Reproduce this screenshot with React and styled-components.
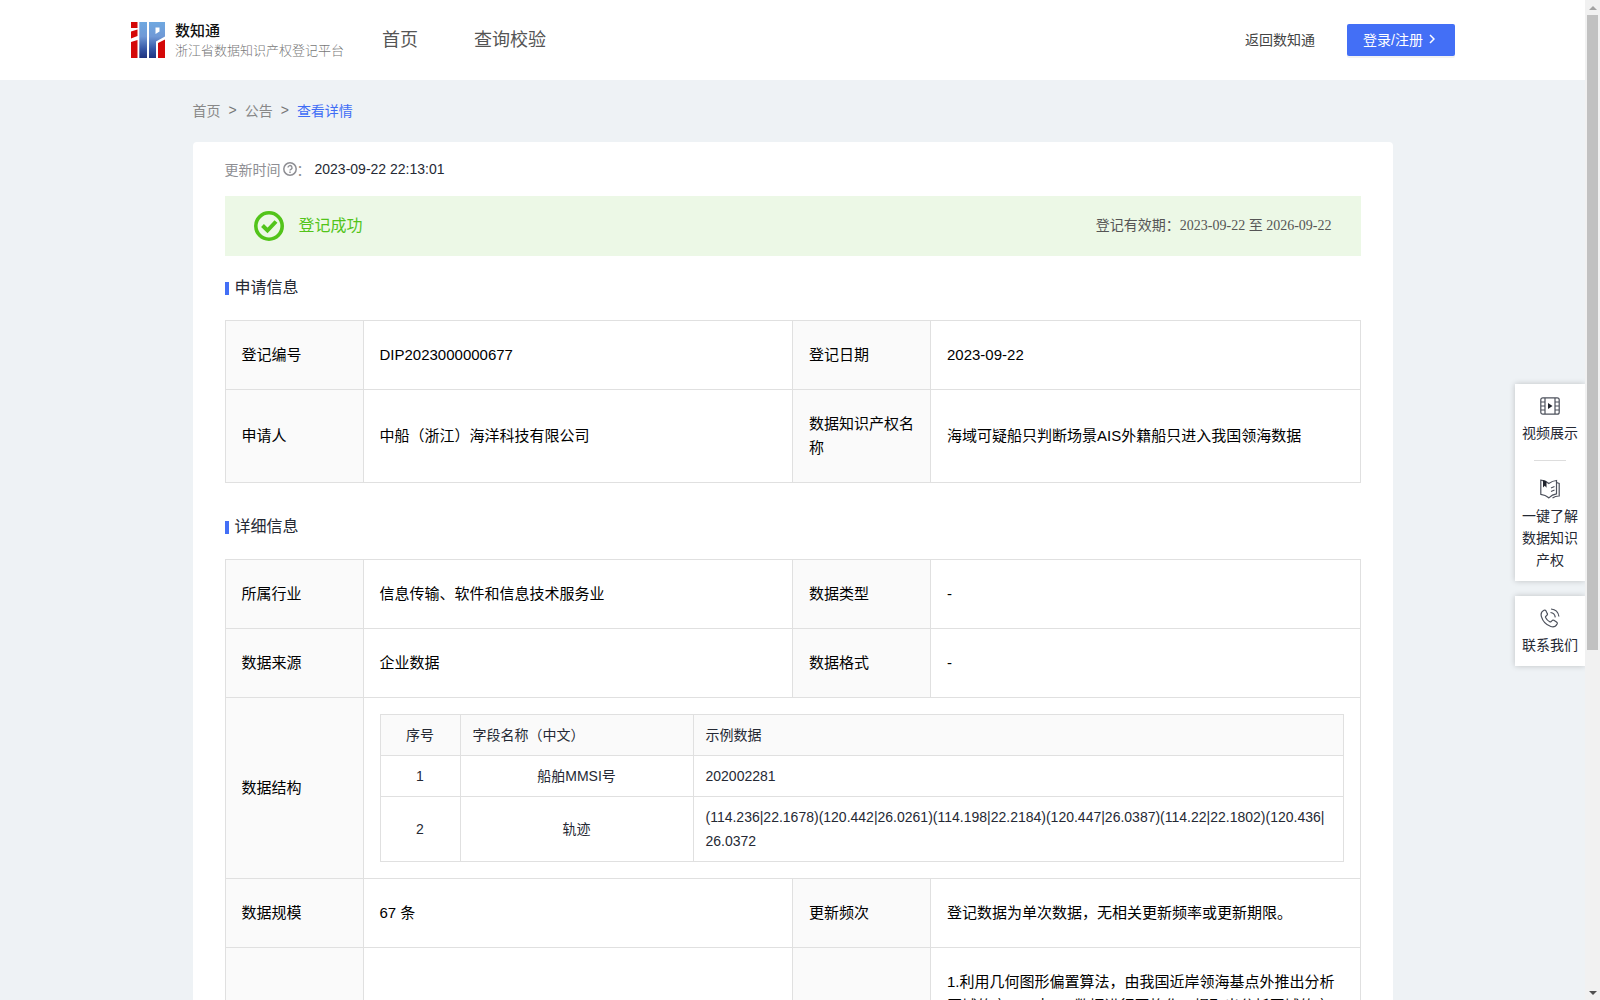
import React from "react";
import styled, { createGlobalStyle, css } from "styled-components";

const applyRows = [
	["登记编号", "DIP2023000000677", "登记日期", "2023-09-22"],
	[
		"申请人",
		"中船（浙江）海洋科技有限公司",
		"数据知识产权名称",
		"海域可疑船只判断场景AIS外籍船只进入我国领海数据",
	],
];

const detailRows = [
	["所属行业", "信息传输、软件和信息技术服务业", "数据类型", "-"],
	["数据来源", "企业数据", "数据格式", "-"],
];

const fields = [
	{ id: 1, name: "船舶MMSI号", sample: "202002281" },
	{
		id: 2,
		name: "轨迹",
		sample: "(114.236|22.1678)(120.442|26.0261)(114.198|22.2184)(120.447|26.0387)(114.22|22.1802)(120.436|26.0372",
	},
];

const Logo = () => (
	<LogoSvg viewBox="0 0 34 36" aria-hidden="true">
		<defs>
			<linearGradient id="logoBlue" x1="0" y1="0" x2="0" y2="36" gradientUnits="userSpaceOnUse">
				<stop offset="0" stopColor="#6fa8e0" />
				<stop offset="0.4" stopColor="#7099d6" />
				<stop offset="0.75" stopColor="#3657a6" />
				<stop offset="1" stopColor="#20347f" />
			</linearGradient>
		</defs>
		<path fill="#d40808" d="M0 0h6.500v6H0zM0 9.500l6.500-2v6.500l-6.500 2.500zM0 20l6.500-2v18H0zM27 21l7-3.500V36h-7z" />
		<path
			fill="url(#logoBlue)"
			fillRule="evenodd"
			d="M8.300 0h7.700v36H8.300zM18 0h16v14.500l-9 5V36h-7zM24.500 5.500v6.500l4-2.500v-4z"
		/>
	</LogoSvg>
);

const HelpIcon = () => (
	<svg width="14" height="14" viewBox="0 0 14 14" fill="none" stroke="currentColor" aria-hidden="true">
		<circle cx="7" cy="7" r="6.2" strokeWidth="1.5" />
		<path d="M5 5.6a2 2 0 1 1 3 1.7c-.7.4-1 .7-1 1.3" strokeWidth="1.4" />
		<path d="M7 9.6v1.3" strokeWidth="1.4" />
	</svg>
);

const SuccessIcon = () => (
	<svg width="30" height="30" viewBox="0 0 30 30" fill="none" stroke="#52c41a" aria-hidden="true">
		<circle cx="15" cy="15" r="13.2" strokeWidth="3.6" />
		<path d="M8.5 14.5l5 5 8.500-9" strokeWidth="4" />
	</svg>
);

const ArrowIcon = () => (
	<svg width="6" height="10" viewBox="0 0 6 10" fill="none" stroke="#fff" strokeWidth="1.5" aria-hidden="true">
		<path d="M1 1l4 4-4 4" />
	</svg>
);

const VideoIcon = () => (
	<svg width="20" height="20" viewBox="0 0 20 20" fill="none" stroke="#4d515c" strokeWidth="1.2" aria-hidden="true">
		<rect x="0.8" y="1.8" width="18.4" height="16.4" rx="2" />
		<path d="M5 2v16M15 2v16M1 6h4M1 10h4M1 14h4M15 6h4M15 10h4M15 14h4" />
		<path d="M8 7v6l4.5-3z" fill="#20232c" stroke="none" />
	</svg>
);

const BookIcon = () => (
	<svg width="20" height="20" viewBox="0 0 20 20" fill="none" stroke="#4d515c" strokeWidth="1.2" aria-hidden="true">
		<path d="M.8 1.200c3.200.2 5.700 1.200 8 3.300 2.300-1.700 4.800-2.800 7.700-3v13.300c-3 .4-5.400 1.700-7.700 4C6.500 16.700 4 15.600.8 15.300z" />
		<path d="M16.500 3.500l2.700 1v12.500c-2.700-.1-4.700.6-6.700 2" />
		<path d="M11 9l3.500-1.500M11 12.500l3.500-1.500" />
		<path d="M3 1v7.500l1.800-1.700 1.700 2V2.500z" fill="#20232c" stroke="none" />
	</svg>
);

const PhoneIcon = () => (
	<svg width="20" height="20" viewBox="0 0 20 20" fill="none" stroke="#4d515c" strokeWidth="1.2" aria-hidden="true">
		<path d="M4 2.300C1.500 3.500.6 5.800 1.400 8.600c1.400 4.800 4.600 8.200 9.400 9.900 2.700.9 5-.1 6.300-2.500.4-.8.1-1.500-.6-2l-2.600-1.700c-.7-.4-1.400-.3-1.900.3l-.9 1c-.4.4-.9.5-1.400.2-1.900-1-3.200-2.400-4.100-4.300-.2-.5-.1-1 .3-1.300l1-.9c.6-.5.7-1.200.3-1.900L5.900 2.800c-.4-.7-1.100-.9-1.900-.5z" />
		<path d="M10.500 4.500c2.700.3 4.400 2 4.800 4.800M11 1c4.500.4 7.300 3 7.900 7.500" />
	</svg>
);

const InfoRow = ({ cells }) => (
	<tr>
		<Label scope="row">{cells[0]}</Label>
		<Value>{cells[1]}</Value>
		<Label scope="row">{cells[2]}</Label>
		<Value>{cells[3]}</Value>
	</tr>
);

const Columns = () => (
	<colgroup>
		<LabelCol />
		<col />
		<LabelCol />
		<col />
	</colgroup>
);

const App = () => {
	return (
		<Shell>
			<GlobalStyle />
			<Page>
				<Header>
					<Brand href="#">
						<Logo />
						<BrandText>
							<BrandName>数知通</BrandName>
							<BrandSub>浙江省数据知识产权登记平台</BrandSub>
						</BrandText>
					</Brand>
					<Nav>
						<NavLink href="#">首页</NavLink>
						<NavLink href="#">查询校验</NavLink>
					</Nav>
					<BackLink href="#">返回数知通</BackLink>
					<LoginButton type="button">
						登录/注册
						<ArrowIcon />
					</LoginButton>
				</Header>

				<Content>
					<Breadcrumb>
						<Crumb href="#">首页</Crumb>
						<Sep>&gt;</Sep>
						<Crumb href="#">公告</Crumb>
						<Sep>&gt;</Sep>
						<Crumb href="#" $active>
							查看详情
						</Crumb>
					</Breadcrumb>

					<Card>
						<UpdateRow>
							更新时间
							<HelpIcon />：<UpdateTime>2023-09-22 22:13:01</UpdateTime>
						</UpdateRow>
						<Banner>
							<SuccessIcon />
							<BannerTitle>登记成功</BannerTitle>
							<Validity>登记有效期：2023-09-22 至 2026-09-22</Validity>
						</Banner>

						<SectionTitle>申请信息</SectionTitle>
						<InfoTable>
							<Columns />
							<tbody>
								{applyRows.map((row) => (
									<InfoRow key={row[0]} cells={row} />
								))}
							</tbody>
						</InfoTable>

						<SectionTitle>详细信息</SectionTitle>
						<InfoTable>
							<Columns />
							<tbody>
								{detailRows.map((row) => (
									<InfoRow key={row[0]} cells={row} />
								))}
								<tr>
									<Label scope="row">数据结构</Label>
									<NestedCell colSpan={3}>
										<FieldTable>
											<thead>
												<tr>
													<FieldHead $width="80px" $center>
														序号
													</FieldHead>
													<FieldHead $width="233px">字段名称（中文）</FieldHead>
													<FieldHead>示例数据</FieldHead>
												</tr>
											</thead>
											<tbody>
												{fields.map((field) => (
													<tr key={field.id}>
														<FieldCell $center>{field.id}</FieldCell>
														<FieldCell $center>{field.name}</FieldCell>
														<FieldCell>{field.sample}</FieldCell>
													</tr>
												))}
											</tbody>
										</FieldTable>
									</NestedCell>
								</tr>
								<InfoRow
									cells={[
										"数据规模",
										"67 条",
										"更新频次",
										"登记数据为单次数据，无相关更新频率或更新期限。",
									]}
								/>
								<RuleRow>
									<Label />
									<Value />
									<Label />
									<Value>
										1.利用几何图形偏置算法，由我国近岸领海基点外推出分析区域的交AIS,由AIS数据进行网格化，提取出分析区域的交
									</Value>
								</RuleRow>
							</tbody>
						</InfoTable>
					</Card>
				</Content>
			</Page>

			<SideTools>
				<ToolBox>
					<Tool href="#">
						<VideoIcon />
						视频展示
					</Tool>
					<Divider />
					<Tool href="#">
						<BookIcon />
						一键了解数据知识产权
					</Tool>
				</ToolBox>
				<ToolBox>
					<Tool href="#">
						<PhoneIcon />
						联系我们
					</Tool>
				</ToolBox>
			</SideTools>

			<ScrollBar>
				<ScrollArrow />
				<ScrollTrack>
					<ScrollThumb />
				</ScrollTrack>
				<ScrollArrow $down />
			</ScrollBar>
		</Shell>
	);
};

export default App;

const GlobalStyle = createGlobalStyle`
	* {
		box-sizing: border-box;
	}
	body {
		margin: 0;
		font-family: "Liberation Sans", "Noto Sans CJK SC", sans-serif;
		font-size: 14px;
		color: #252934;
		background: #eef2f5;
	}
	a {
		color: inherit;
		text-decoration: none;
	}
`;

const Shell = styled.div`
	position: relative;
	display: flex;
	height: 100vh;
	overflow: hidden;
`;

const Page = styled.div`
	flex: 1;
	min-width: 0;
	overflow: hidden;
`;

const Header = styled.header`
	display: flex;
	align-items: center;
	height: 80px;
	padding: 0 130px;
	background: #fff;
`;

const Brand = styled.a`
	display: flex;
	align-items: center;
	gap: 10px;
	padding-left: 1px;
`;

const LogoSvg = styled.svg`
	width: 34px;
	height: 36px;
`;

const BrandText = styled.div`
	display: flex;
	flex-direction: column;
	font-family: "Noto Sans CJK SC", sans-serif;
	line-height: 20px;
`;

const BrandName = styled.span`
	font-size: 15px;
	font-weight: 500;
	color: #111;
`;

const BrandSub = styled.span`
	font-size: 13px;
	font-weight: 300;
	color: #777;
`;

const Nav = styled.nav`
	display: flex;
	flex: 1;
	gap: 56px;
	margin-left: 38px;
`;

const NavLink = styled.a`
	font-size: 18px;
	line-height: 24px;
	color: #555;
`;

const BackLink = styled.a`
	padding-bottom: 2px;
	color: #444;
`;

const LoginButton = styled.button`
	display: flex;
	align-items: center;
	gap: 6px;
	width: 108px;
	height: 32px;
	margin-left: 32px;
	padding: 0 16px 2px;
	border: 0;
	border-radius: 2px;
	background: #436ff6;
	box-shadow: 0 2px 0 rgba(0, 0, 0, 0.05);
	color: #fff;
	font-family: inherit;
	font-size: 14px;
	cursor: pointer;
`;

const Content = styled.main`
	max-width: 1200px;
	margin: 0 auto;
`;

const Breadcrumb = styled.nav`
	display: flex;
	align-items: center;
	gap: 8px;
	height: 62px;
	padding-bottom: 2px;
`;

const Crumb = styled.a`
	color: ${(props) => (props.$active ? "#3f6df5" : "#888")};
`;

const Sep = styled.span`
	color: #777;
`;

const Card = styled.section`
	padding: 16px 32px;
	border-radius: 4px;
	background: #fff;
`;

const UpdateRow = styled.div`
	display: flex;
	align-items: center;
	height: 22px;
	margin-bottom: 16px;
	color: #8e8e93;

	svg {
		margin-left: 2px;
	}
`;

const UpdateTime = styled.span`
	margin-left: 4px;
	color: #252934;
`;

const Banner = styled.div`
	display: flex;
	align-items: center;
	height: 60px;
	padding: 0 29px;
	background: #ecf8e6;

	span {
		padding-bottom: 4px;
	}
`;

const BannerTitle = styled.span`
	flex: 1;
	margin-left: 15px;
	font-size: 16px;
	color: #52c41a;
`;

const Validity = styled.span`
	font-family: "Liberation Serif", "Noto Sans CJK SC", serif;
	color: #555;
`;

const SectionTitle = styled.h2`
	display: flex;
	align-items: center;
	gap: 6px;
	height: 24px;
	margin: 18px 0 22px;
	font-size: 16px;
	font-weight: 400;

	&::before {
		content: "";
		width: 4px;
		height: 13px;
		margin-top: 4px;
		background: #436ff6;
	}
`;

const InfoTable = styled.table`
	width: 100%;
	margin-bottom: 30px;
	border-collapse: collapse;
	table-layout: fixed;
	color: #000;
	font-size: 15px;
	line-height: 24px;
`;

const LabelCol = styled.col`
	width: 138px;
`;

const cell = css`
	border: 1px solid #e0e0e0;
	text-align: left;
	font-weight: 400;
`;

const Label = styled.th`
	${cell}
	padding: 22px 16px;
	background: #fafafa;
`;

const Value = styled.td`
	${cell}
	padding: 22px 16px;
`;

const NestedCell = styled.td`
	${cell}
	padding: 16px;
`;

const RuleRow = styled.tr`
	height: 320px;
	vertical-align: top;
`;

const FieldTable = styled.table`
	width: 100%;
	border-collapse: collapse;
	table-layout: fixed;
	color: #252934;
	font-size: 14px;
`;

const FieldHead = styled.th`
	${cell}
	width: ${(props) => props.$width || "auto"};
	padding: 8px 12px;
	text-align: ${(props) => (props.$center ? "center" : "left")};
	background: #fafafa;
`;

const FieldCell = styled.td`
	${cell}
	padding: 8px 12px;
	text-align: ${(props) => (props.$center ? "center" : "left")};
	word-break: break-all;
`;

const SideTools = styled.aside`
	position: absolute;
	top: 384px;
	right: 15px;
	display: flex;
	flex-direction: column;
	gap: 15px;
	width: 70px;
`;

const ToolBox = styled.div`
	background: #fff;
	box-shadow: 0 0 6px rgba(0, 0, 0, 0.2);
	clip-path: inset(-8px 0 -8px -8px);
`;

const Tool = styled.a`
	display: flex;
	flex-direction: column;
	align-items: center;
	gap: 6px;
	padding: 12px 7px 10px;
	line-height: 22px;
	text-align: center;
`;

const Divider = styled.div`
	width: 32px;
	height: 1px;
	margin: 6px auto;
	background: #ddd;
`;

const ScrollBar = styled.div`
	display: flex;
	flex-direction: column;
	width: 15px;
	background: #f1f1f1;
`;

const ScrollArrow = styled.div`
	display: flex;
	align-items: center;
	justify-content: center;
	height: 15px;

	&::before {
		content: "";
		border: 4px solid transparent;
		border-top-width: ${(props) => (props.$down ? "4px" : "0")};
		border-bottom-width: ${(props) => (props.$down ? "0" : "4px")};
		border-top-color: #505050;
		border-bottom-color: #a3a3a3;
	}
`;

const ScrollTrack = styled.div`
	flex: 1;
	padding: 0 2px;
`;

const ScrollThumb = styled.div`
	height: 65.5%;
	background: #c1c1c1;
`;
